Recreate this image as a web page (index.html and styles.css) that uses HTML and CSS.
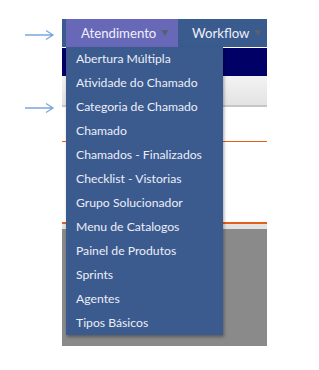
FILE: index.html
```html
<!DOCTYPE html>
<html>
  <head>
    <meta charset="UTF-8">
    <meta name="viewport" content="width=device-width, initial-scale=1.0">
    <title>Menu</title>
    <link rel="stylesheet" href="styles.css">
  </head>
  <body>
    <!-- setas de anotação -->
    <svg class="pointer pointer1" width="32" height="12" viewBox="0 0 32 12">
      <path d="M1 6 H29 M22 1.5 L29 6 L22 10.5" fill="none" stroke="#7aa8da" stroke-width="1.3"/>
    </svg>
    <svg class="pointer pointer2" width="32" height="12" viewBox="0 0 32 12">
      <path d="M1 6 H29 M22 1.5 L29 6 L22 10.5" fill="none" stroke="#7aa8da" stroke-width="1.3"/>
    </svg>

    <div class="screen">
      <div class="navbar">
        <div class="nav-item active">
          <span class="label">Atendimento</span><span class="caret"></span>
          <ul class="dropdown">
            <li>Abertura Múltipla</li>
            <li>Atividade do Chamado</li>
            <li>Categoria de Chamado</li>
            <li>Chamado</li>
            <li>Chamados - Finalizados</li>
            <li>Checklist - Vistorias</li>
            <li>Grupo Solucionador</li>
            <li>Menu de Catalogos</li>
            <li>Painel de Produtos</li>
            <li>Sprints</li>
            <li>Agentes</li>
            <li>Tipos Básicos</li>
          </ul>
        </div>
        <div class="nav-item">
          <span class="label">Workflow</span><span class="caret"></span>
        </div>
      </div>
      <div class="header-strip"></div>
      <div class="toolbar"></div>
      <div class="content">
        <div class="line"></div>
      </div>
      <div class="footer-line"></div>
      <div class="footer"></div>
    </div>
  </body>
</html>
```

FILE: styles.css
```css
* {
  margin: 0;
  padding: 0;
  box-sizing: border-box;
}

body {
  background: #fff;
  font-family: "Segoe UI", "Lato", "Noto Sans", sans-serif;
}

ul {
  list-style: none;
}

.pointer {
  position: absolute;
  left: 24px;
}
.pointer1 {
  top: 29px;
}
.pointer2 {
  top: 102px;
}

.screen {
  width: 205px;
  margin: 19px 0 0 62px;
}

.navbar {
  display: flex;
  height: 28px;
  padding-left: 4px;
  background-color: #3a5b8e;
}

.nav-item {
  position: relative;
  display: flex;
  align-items: center;
  height: 28px;
  padding-left: 14px;
  font-size: 13.2px;
  color: #eef0fa;
}

.nav-item.active {
  width: 112px;
  padding-left: 15px;
  background-color: #6868b8;
}

.caret {
  flex: none;
  width: 7px;
  height: 6px;
  margin-left: 5px;
  background-color: #5a5f6e;
  clip-path: polygon(0 0, 100% 0, 50% 100%);
}

.dropdown {
  position: absolute;
  top: 28px;
  left: 0;
  width: 157px;
  background-color: #3b5b8f;
  box-shadow: 1px 2px 3px rgba(0, 0, 0, 0.35);
  z-index: 2;
}

.dropdown li {
  height: 24px;
  line-height: 24px;
  padding-left: 10px;
  font-size: 12.2px;
  color: #eceef8;
  white-space: nowrap;
}

.header-strip {
  height: 29px;
  border-top: 1px solid #fff;
  background-color: #000066;
}

.toolbar {
  height: 31px;
  background: linear-gradient(#f3f3f3, #e3e3e3);
  border-bottom: 2px solid #c6c6c6;
}

.content {
  height: 115px;
  padding-top: 34px;
}

.line {
  height: 1px;
  background-color: #e0601c;
}

.footer-line {
  height: 7px;
  border-top: 2px solid #e0601c;
  background-color: #e2e2e2;
}

.footer {
  height: 117px;
  background-color: #8a8a8a;
}
```
